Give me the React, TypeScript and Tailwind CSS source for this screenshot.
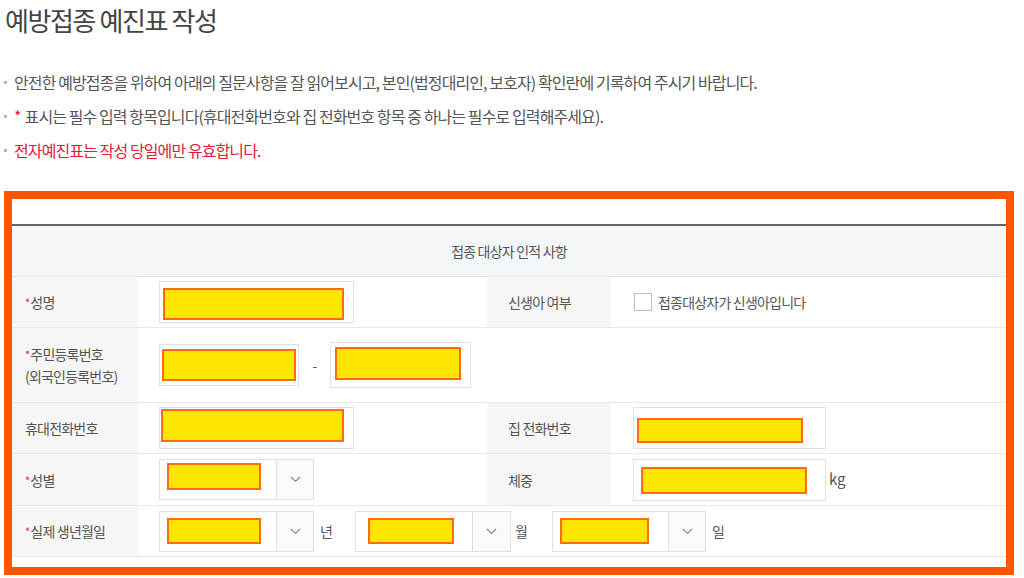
import React from 'react';

const Redact = ({ className }: { className: string }) => (
  <div className={`bg-[#ffe600] border-2 border-[#ff6a13] shrink-0 ${className}`}></div>
);

const Star = () => <span className="text-[#e4183b] text-[11px] align-top mr-[1px]">*</span>;

const Chevron = () => (
  <svg width="11" height="7" viewBox="0 0 11 7" fill="none">
    <polyline points="1,1 5.5,5.5 10,1" stroke="#8a8a8a" strokeWidth="1.2" />
  </svg>
);

const SelectBox = ({ width, main, children }: { width: string; main: string; children: React.ReactNode }) => (
  <div className={`flex h-[41px] border border-[#e0e0e0] bg-white shrink-0 ${width}`}>
    <div className={`flex items-center ${main}`}>{children}</div>
    <div className="flex-1 flex items-center justify-center border-l border-[#e0e0e0] bg-[#fafafa]">
      <Chevron />
    </div>
  </div>
);

const Label = ({ children, right }: { children: React.ReactNode; right?: boolean }) => (
  <div className={`bg-[#f6f6f6] flex items-center ${right ? 'pl-[21px]' : 'pl-[13px]'}`}>
    <div className="leading-[22px]">{children}</div>
  </div>
);

const App: React.FC = () => {
  return (
    <div className="w-[1024px] h-[578px] bg-white overflow-hidden font-['Noto_Sans_CJK_KR','Noto_Sans_CJK_SC',sans-serif]">
      <h1 className="pl-[5px] pt-[5px] text-[26px] leading-[30px] tracking-[-1.4px] text-[#444] font-normal">
        예방접종 예진표 작성
      </h1>

      <ul className="mt-[30px] pl-[4px] text-[16px] tracking-[-0.9px] text-[#555]">
        <li className="h-[34px] flex items-center">
          <span className="w-[3px] h-[3px] bg-[#b5b5b5] mr-[7px]"></span>
          안전한 예방접종을 위하여 아래의 질문사항을 잘 읽어보시고, 본인(법정대리인, 보호자) 확인란에 기록하여 주시기 바랍니다.
        </li>
        <li className="h-[34px] flex items-center">
          <span className="w-[3px] h-[3px] bg-[#b5b5b5] mr-[7px]"></span>
          <span className="text-[#e4183b] mr-[4px]">*</span>
          표시는 필수 입력 항목입니다(휴대전화번호와 집 전화번호 항목 중 하나는 필수로 입력해주세요).
        </li>
        <li className="h-[34px] flex items-center">
          <span className="w-[3px] h-[3px] bg-[#b5b5b5] mr-[7px]"></span>
          <span className="text-[#e4183b]">전자예진표는 작성 당일에만 유효합니다.</span>
        </li>
      </ul>

      <div className="mt-[24px] mx-[4px] w-[1010px] border-[8px] border-[#ff5500] pt-[25px] pb-[10px] text-[14px] tracking-[-0.8px] text-[#555]">
        <div className="border-t-2 border-[#666]">
          <div className="h-[51px] bg-[#f4f7fa] border-b border-[#e6e6e6] flex items-center justify-center">
            접종 대상자 인적 사항
          </div>

          {/* 성명 / 신생아 여부 */}
          <div className="grid grid-cols-[126px_349px_124px_1fr] h-[51px] border-b border-[#e8e8e8]">
            <Label><Star />성명</Label>
            <div className="flex items-center pl-[21px]">
              <div className="w-[195px] h-[42px] border border-[#e0e0e0] flex items-center pl-[3px] pt-[3px]">
                <Redact className="w-[181px] h-[32px]" />
              </div>
            </div>
            <Label right>신생아 여부</Label>
            <div className="flex items-center pl-[23px]">
              <span className="w-[18px] h-[18px] border border-[#bdbdbd] bg-white mr-[6px]"></span>
              접종대상자가 신생아입니다
            </div>
          </div>

          {/* 주민등록번호 */}
          <div className="grid grid-cols-[126px_1fr] h-[75px] border-b border-[#e8e8e8]">
            <Label>
              <div><Star />주민등록번호</div>
              <div>(외국인등록번호)</div>
            </Label>
            <div className="flex items-center pl-[21px]">
              <div className="w-[140px] h-[42px] border border-[#e0e0e0] flex items-center pl-[2px]">
                <Redact className="w-[134px] h-[32px]" />
              </div>
              <span className="w-[31px] text-center">-</span>
              <div className="w-[141px] h-[46px] border border-[#e0e0e0] flex items-center pl-[4px] pb-[3px]">
                <Redact className="w-[126px] h-[33px]" />
              </div>
            </div>
          </div>

          {/* 휴대전화번호 / 집 전화번호 */}
          <div className="grid grid-cols-[126px_349px_124px_1fr] h-[51px] border-b border-[#e8e8e8]">
            <Label>휴대전화번호</Label>
            <div className="flex items-center pl-[21px]">
              <div className="w-[195px] h-[42px] border border-[#e0e0e0] flex items-start pl-[1px] pt-[1px]">
                <Redact className="w-[183px] h-[33px]" />
              </div>
            </div>
            <Label right>집 전화번호</Label>
            <div className="flex items-center pl-[22px]">
              <div className="w-[193px] h-[42px] border border-[#e0e0e0] flex items-center pl-[3px] pt-[5px]">
                <Redact className="w-[166px] h-[25px]" />
              </div>
            </div>
          </div>

          {/* 성별 / 체중 */}
          <div className="grid grid-cols-[126px_349px_124px_1fr] h-[52px] border-b border-[#e8e8e8]">
            <Label><Star />성별</Label>
            <div className="flex items-center pl-[21px]">
              <SelectBox width="w-[155px]" main="w-[116px] items-start pt-[3px] pl-[7px]">
                <Redact className="w-[94px] h-[27px]" />
              </SelectBox>
            </div>
            <Label right>체중</Label>
            <div className="flex items-center pl-[22px]">
              <div className="w-[193px] h-[42px] border border-[#e0e0e0] flex items-center pl-[7px] pt-[1px]">
                <Redact className="w-[166px] h-[27px]" />
              </div>
              <span className="ml-[3px] text-[15px] tracking-normal">kg</span>
            </div>
          </div>

          {/* 실제 생년월일 */}
          <div className="grid grid-cols-[126px_1fr] h-[51px] border-b border-[#e8e8e8]">
            <Label><Star />실제 생년월일</Label>
            <div className="flex items-center pl-[21px]">
              <SelectBox width="w-[155px]" main="w-[116px] pl-[7px]">
                <Redact className="w-[94px] h-[26px]" />
              </SelectBox>
              <span className="ml-[6px] w-[35px]">년</span>
              <SelectBox width="w-[156px]" main="w-[116px] pl-[12px]">
                <Redact className="w-[86px] h-[26px]" />
              </SelectBox>
              <span className="ml-[4px] w-[37px]">월</span>
              <SelectBox width="w-[154px]" main="w-[115px] pl-[7px]">
                <Redact className="w-[89px] h-[26px]" />
              </SelectBox>
              <span className="ml-[6px]">일</span>
            </div>
          </div>
        </div>
      </div>
    </div>
  );
};

export default App;
